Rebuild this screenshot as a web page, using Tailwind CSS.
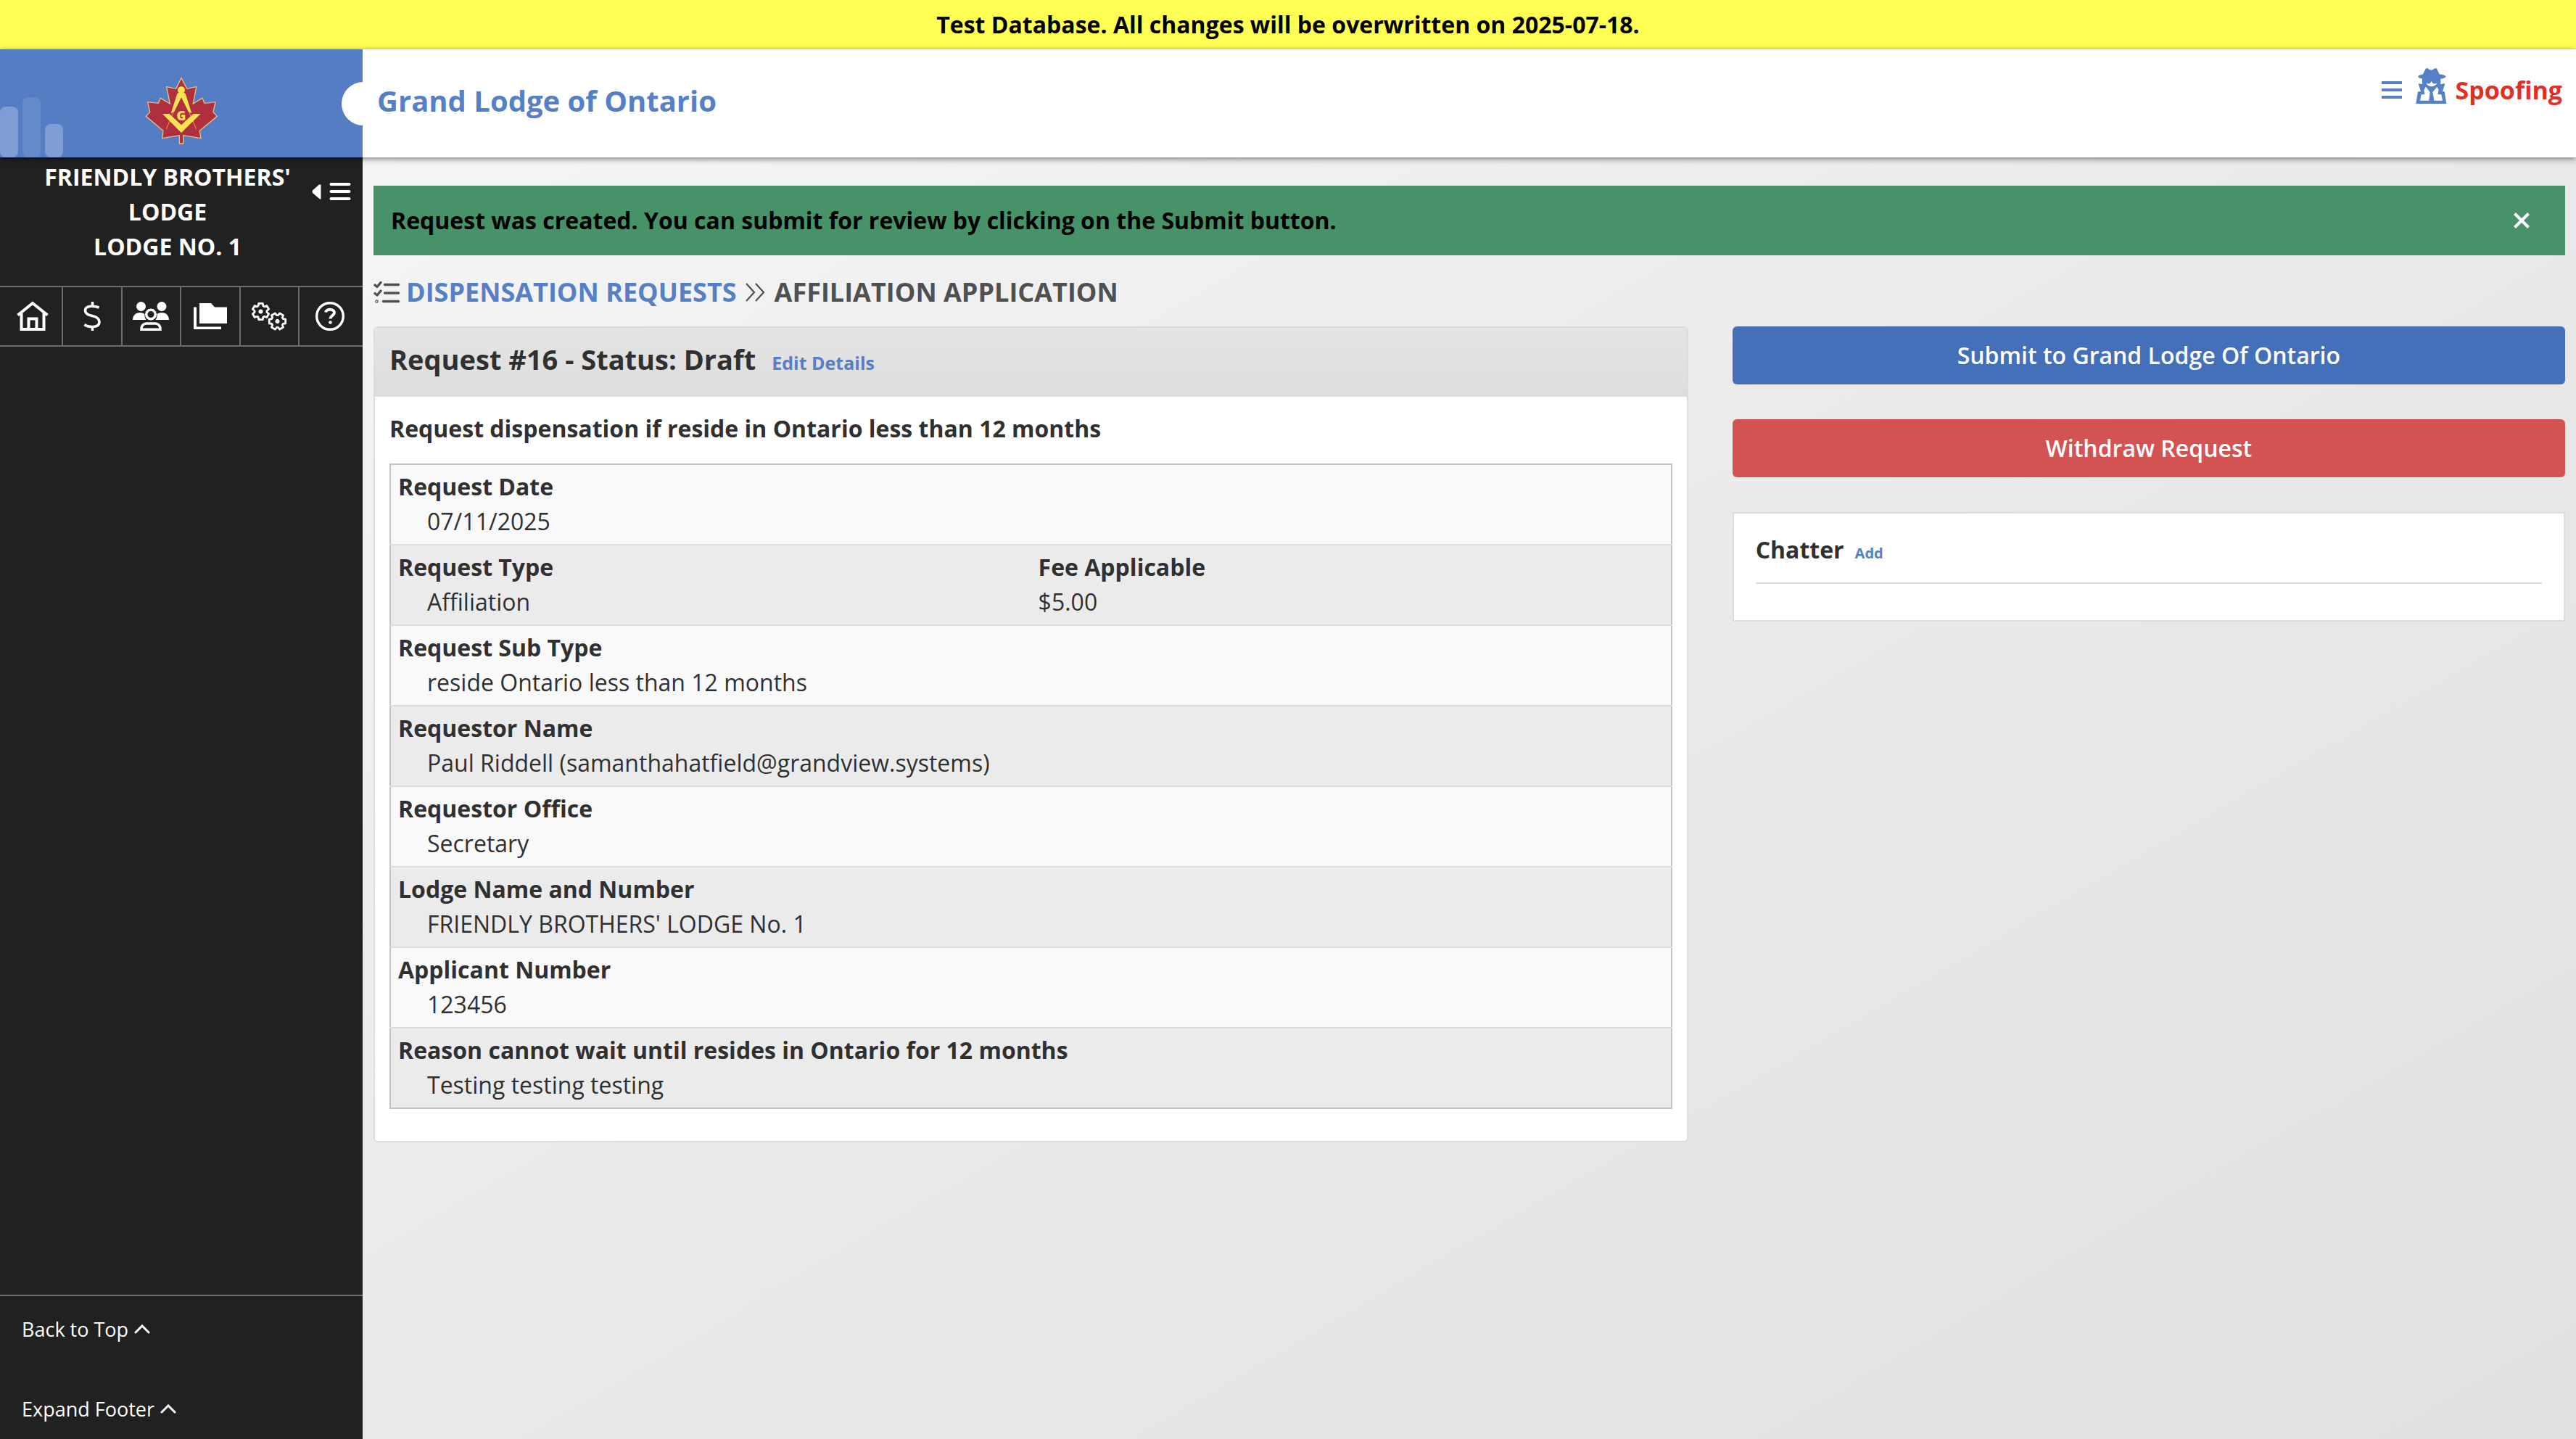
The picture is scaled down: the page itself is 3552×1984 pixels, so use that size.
<!DOCTYPE html>
<html lang="en">
<head>
<meta charset="utf-8">
<title>Grand Lodge of Ontario</title>
<script src="https://cdn.jsdelivr.net/npm/@tailwindcss/browser@4"></script>
</head>
<body class="flex min-h-screen flex-col bg-[#f5f5f5] font-['Open_Sans',sans-serif] text-[32px] leading-[48px] text-[#303030]">

<div class="flex h-[68px] items-center justify-center bg-[#ffff54] font-bold text-black">
  <p>Test Database. All changes will be overwritten on 2025-07-18.</p>
</div>

<header class="relative z-10 flex h-[149px] bg-white shadow-[0_2px_8px_rgba(0,0,0,0.5)]">
  <div class="relative flex w-[500px] shrink-0 items-center justify-center bg-[#547dc3]">
    <div class="absolute bottom-0 left-0 flex items-end gap-[6px]">
      <span class="h-[70px] w-[25px] rounded-[8px] bg-white/25"></span>
      <span class="h-[83px] w-[25px] rounded-[8px] bg-white/10"></span>
      <span class="h-[46px] w-[25px] rounded-[8px] bg-white/25"></span>
    </div>
    <a href="#" aria-label="Home page" class="mt-[20px]">
      <svg class="h-[100px] w-[106px]" viewBox="50 40 318 300">
        <path d="M209 53L232 98L271 90L258 160L296 137L305 158L350 153L341 195L357 212L285 272L290 303L217 291V325H201V291L130 303L134 272L63 212L79 195L70 153L114 158L123 137L162 160L148 90L187 98Z" fill="#b02f3f" stroke="#e0c080" stroke-width="4"/>
        <path d="M209 118L147 265M209 118L271 265" stroke="#e9a34a" stroke-width="3"/>
        <path d="M131 202H160L209 248L258 202H289L209 280Z" fill="#fbe251"/>
        <path d="M203 112L192 118L166 200L180 192L209 134L238 192L252 200L226 118L215 112Z" fill="#fbe251"/>
        <circle cx="209" cy="104" r="15" fill="#fbe251"/>
        <text x="209" y="228" text-anchor="middle" font-family="Open Sans" font-weight="800" font-size="52" fill="#fbe251">G</text>
      </svg>
    </a>
    <span class="absolute top-[45px] -right-[31px] size-[60px] rounded-full bg-white"></span>
  </div>
  <div class="relative flex flex-1 justify-between pt-[21px] pr-[19px] pl-[20px]">
    <h1 class="pt-[26px] text-[40px] font-bold text-[#5580c5]">Grand Lodge of Ontario</h1>
    <div class="flex items-center self-start">
      <button type="button" aria-label="Menu">
        <svg class="h-[28px] w-[28px]" viewBox="0 0 28 28" stroke="#5580c5" stroke-width="4"><path d="M0 4H28M0 14H28M0 24H28"/></svg>
      </button>
      <svg class="mb-[10px] ml-[12px] h-[60px] w-[60px]" viewBox="0 0 180 180">
        <g fill="#5580c5">
          <path d="M46 50L62 17Q68 12 74 19L85 23L96 19Q102 12 108 17L124 50Z"/>
          <ellipse cx="88" cy="50" rx="57" ry="12"/>
          <path d="M48 54H124V76Q118 104 86 108Q54 104 48 76Z"/>
          <path d="M22 162L30 112H42L32 79L54 82Q86 112 118 82L142 79L132 112H140L148 162Z"/>
        </g>
        <g fill="#fff">
          <path d="M64 76Q76 84 83 74L86 68L89 74Q96 84 110 76Q104 90 86 91Q68 90 64 76Z"/>
          <path d="M63 92L80 114L76 149H39L44 124H58L55 104Z"/>
          <path d="M109 92L91 114L97 149H132L127 124H112L116 104Z"/>
        </g>
      </svg>
      <a href="#" class="ml-[2px] text-[34px] font-bold text-[#e03024]">Spoofing</a>
    </div>
  </div>
</header>

<div class="flex flex-1">
  <aside class="flex w-[500px] shrink-0 flex-col bg-[#212121] text-white">
    <div class="relative flex h-[177px] justify-center pt-[3px] pr-[38px] text-center font-bold">
      <p>FRIENDLY BROTHERS'<br>LODGE<br>LODGE NO. 1</p>
      <button type="button" aria-label="Collapse menu" class="absolute top-[33px] right-[16px]">
        <svg class="h-[28px] w-[54px]" viewBox="0 0 54 28"><path d="M12.500 4.500V24.500H11L1 16Q0 14 1 12.500L10 4.500Z" fill="#fff"/><path d="M26.500 4H51.500M26.500 14H51.500M26.500 24H51.500" stroke="#fff" stroke-width="4" stroke-linecap="round"/></svg>
      </button>
    </div>
    <nav class="flex h-[84px] border-y-2 border-[#6c6c6c]">
      <a href="#" aria-label="Home" class="flex w-[87px] items-center justify-center border-r-2 border-[#6c6c6c] pl-[4px]">
        <svg class="h-[42px] w-[44px]" viewBox="0 0 44 42" fill="none" stroke="#fff" stroke-width="4"><path d="M1.500 19.500L22 3L42.500 19.500"/><path d="M6.500 17V39H37.500V17"/><path d="M16.500 39V24.500H27.500V39"/></svg>
      </a>
      <a href="#" aria-label="Finances" class="flex flex-1 items-center justify-center border-r-2 border-[#6c6c6c]">
        <svg class="h-[42px] w-[24px]" viewBox="0 0 24 42" fill="none" stroke="#fff" stroke-width="3.600"><path d="M21.500 9C17 7 2.500 5 2.500 13C2.500 18 7 19.500 12 20.500S22 24 22 29C22 38 6 36 1.500 32.500"/><path d="M12.500 1V7M12.500 35V41"/></svg>
      </a>
      <a href="#" aria-label="Members" class="flex flex-1 items-center justify-center border-r-2 border-[#6c6c6c]">
        <svg class="h-[42px] w-[50px]" viewBox="0 0 50 42"><g fill="#fff"><circle cx="11.500" cy="7.500" r="6.500"/><circle cx="40" cy="7.500" r="6.500"/><path d="M0 26C0 20 4 16 10 16C13 16 15 17 16.500 18C16 21 17 24 18.500 26Z"/><path d="M50 26C50 20 46 16 40 16C37 16 35 17 33.500 18C34 21 33 24 31.500 26Z"/></g><g fill="none" stroke="#fff" stroke-width="3.400"><circle cx="25" cy="18.500" r="6.300"/><path d="M12 39.300V38C12 34 15 31 19 31H31C35 31 38 34 38 38V39.300Z"/></g></svg>
      </a>
      <a href="#" aria-label="Files" class="flex flex-1 items-center justify-center border-r-2 border-[#6c6c6c]">
        <svg class="h-[42px] w-[46px]" viewBox="0 0 46 42" fill="#fff"><path d="M8 3H24L29 8.500H46V31H8Z"/><path d="M0 8.500H4V35.500H38V39H0Z"/></svg>
      </a>
      <a href="#" aria-label="Settings" class="flex flex-1 items-center justify-center border-r-2 border-[#6c6c6c]">
        <svg class="h-[42px] w-[50px]" viewBox="346 415 50 42" fill="none" stroke="#fff" stroke-width="2.800" stroke-linejoin="round">
          <g transform="translate(359.500 429.500)"><path d="M-3.400 -7.800L-2.800 -11.200H2.800L3.400 -7.800L5.100 -6.800L8.300 -8L11.100 -3.200L8.500 -1V1L11.100 3.200L8.300 8L5.100 6.800L3.400 7.800L2.800 11.200H-2.800L-3.400 7.800L-5.100 6.800L-8.300 8L-11.100 3.200L-8.500 1V-1L-11.100 -3.200L-8.300 -8L-5.100 -6.800Z"/><circle r="3" fill="#fff" stroke="none"/></g>
          <g transform="translate(382.500 443) rotate(30)"><path d="M-3.400 -7.800L-2.800 -11.200H2.800L3.400 -7.800L5.100 -6.800L8.300 -8L11.100 -3.200L8.500 -1V1L11.100 3.200L8.300 8L5.100 6.800L3.400 7.800L2.800 11.200H-2.800L-3.400 7.800L-5.100 6.800L-8.300 8L-11.100 3.200L-8.500 1V-1L-11.100 -3.200L-8.300 -8L-5.100 -6.800Z"/><circle r="3" fill="#fff" stroke="none"/></g>
        </svg>
      </a>
      <a href="#" aria-label="Help" class="flex w-[87px] items-center justify-center pr-[4px]">
        <svg class="h-[42px] w-[42px]" viewBox="0 0 42 42" fill="none" stroke="#fff"><circle cx="21" cy="21" r="18.300" stroke-width="3.400"/><path d="M15 15.500C16 10.500 27 10.500 27 16C27 20 21.500 20 21.500 24.500" stroke-width="4"/><circle cx="21.500" cy="29.500" r="2.300" fill="#fff" stroke="none"/></svg>
      </a>
    </nav>
    <div class="mt-auto flex flex-col items-start gap-[70px] border-t-2 border-[#6c6c6c] pt-[26px] pb-[21px] pl-[30px] text-[27px] leading-[40px]">
      <a href="#" class="flex items-center gap-[8px]">Back to Top
        <svg class="h-[14px] w-[22px]" viewBox="0 0 22 14" fill="none" stroke="#fff" stroke-width="3" stroke-linecap="round"><path d="M2 11L11 2L20 11"/></svg>
      </a>
      <a href="#" class="flex items-center gap-[8px]">Expand Footer
        <svg class="h-[14px] w-[22px]" viewBox="0 0 22 14" fill="none" stroke="#fff" stroke-width="3" stroke-linecap="round"><path d="M2 11L11 2L20 11"/></svg>
      </a>
    </div>
  </aside>

  <main class="min-w-0 flex-1 bg-linear-to-br from-[#f5f5f5] via-[#e9e9e9] to-[#e1e1e1] px-[15px] pt-[39px]">
    <div role="alert" class="flex h-[96px] items-center justify-between bg-[#479268] pr-[48px] pl-[24px] font-bold text-black">
      <p>Request was created. You can submit for review by clicking on the Submit button.</p>
      <button type="button" aria-label="Close">
        <svg class="size-[24px]" viewBox="0 0 24 24" stroke="#fff" stroke-width="4"><path d="M2.500 2.500L21.500 21.500M21.500 2.500L2.500 21.500"/></svg>
      </button>
    </div>

    <nav class="mt-[27px] mb-[23px] flex items-center text-[36px] font-bold text-[#505050]">
      <svg class="h-[34px] w-[37px]" viewBox="0 0 37 34" fill="none" stroke="#505050" stroke-width="3.400" stroke-linecap="round" stroke-linejoin="round"><path d="M15.500 6.500H34.500M15.500 18H34.500M13.500 29.500H34.500"/><path d="M2 7L5 9.500L10 3.500M2 18.500L5 21L10 15"/><circle cx="4.500" cy="29.500" r="0.600"/></svg>
      <a href="#" class="ml-[8px] text-[#5580c5]">DISPENSATION REQUESTS</a>
      <svg class="ml-[11px] h-[28px] w-[28px]" viewBox="0 0 28 28" fill="none" stroke="#505050" stroke-width="2.200"><path d="M2 2L13 14L2 26M15 2L26 14L15 26"/></svg>
      <span class="ml-[13px]">AFFILIATION APPLICATION</span>
    </nav>

    <div class="flex items-start justify-between">
      <section class="w-[60%] overflow-hidden rounded-[6px] border-2 border-[#dcdcdc] bg-white">
        <div class="flex h-[95px] items-baseline bg-linear-to-b from-[#e4e4e4] to-[#dddddd] px-[20px] pt-[19px]">
          <h2 class="text-[38px] font-bold">Request #16 - Status: Draft</h2>
          <a href="#" class="ml-[22px] text-[25px] font-bold text-[#5580c5]">Edit Details</a>
        </div>
        <div class="px-[20px] pt-[20px] pb-[44px]">
          <h3 class="font-bold">Request dispensation if reside in Ontario less than 12 months</h3>
          <table class="mt-[24px] w-full table-fixed border-collapse border-2 border-[#c3c3c3]">
            <tbody>
              <tr class="border-b-2 border-[#dcdcdc] bg-[#f9f9f9]"><td colspan="2" class="px-[10px] pt-[6px] pb-[7px]"><strong class="block">Request Date</strong><span class="block pl-[40px]">07/11/2025</span></td></tr>
              <tr class="border-b-2 border-[#dcdcdc] bg-[#ebebeb]"><td class="px-[10px] pt-[6px] pb-[7px]"><strong class="block">Request Type</strong><span class="block pl-[40px]">Affiliation</span></td><td class="px-[10px] pt-[6px] pb-[7px]"><strong class="block">Fee Applicable</strong><span class="block">$5.00</span></td></tr>
              <tr class="border-b-2 border-[#dcdcdc] bg-[#f9f9f9]"><td colspan="2" class="px-[10px] pt-[6px] pb-[7px]"><strong class="block">Request Sub Type</strong><span class="block pl-[40px]">reside Ontario less than 12 months</span></td></tr>
              <tr class="border-b-2 border-[#dcdcdc] bg-[#ebebeb]"><td colspan="2" class="px-[10px] pt-[6px] pb-[7px]"><strong class="block">Requestor Name</strong><span class="block pl-[40px]">Paul Riddell (samanthahatfield@grandview.systems)</span></td></tr>
              <tr class="border-b-2 border-[#dcdcdc] bg-[#f9f9f9]"><td colspan="2" class="px-[10px] pt-[6px] pb-[7px]"><strong class="block">Requestor Office</strong><span class="block pl-[40px]">Secretary</span></td></tr>
              <tr class="border-b-2 border-[#dcdcdc] bg-[#ebebeb]"><td colspan="2" class="px-[10px] pt-[6px] pb-[7px]"><strong class="block">Lodge Name and Number</strong><span class="block pl-[40px]">FRIENDLY BROTHERS' LODGE No. 1</span></td></tr>
              <tr class="border-b-2 border-[#dcdcdc] bg-[#f9f9f9]"><td colspan="2" class="px-[10px] pt-[6px] pb-[7px]"><strong class="block">Applicant Number</strong><span class="block pl-[40px]">123456</span></td></tr>
              <tr class="bg-[#ebebeb]"><td colspan="2" class="px-[10px] pt-[6px] pb-[7px]"><strong class="block">Reason cannot wait until resides in Ontario for 12 months</strong><span class="block pl-[40px]">Testing testing testing</span></td></tr>
            </tbody>
          </table>
        </div>
      </section>

      <div class="flex w-[38%] flex-col gap-[48px]">
        <button type="button" class="h-[80px] rounded-[6px] bg-[#4470b9] font-semibold text-white">Submit to Grand Lodge Of Ontario</button>
        <button type="button" class="h-[80px] rounded-[6px] bg-[#d25352] font-semibold text-white">Withdraw Request</button>
        <section class="border-2 border-[#dcdcdc] bg-white px-[30px] pt-[26px] pb-[50px]">
          <div class="flex items-baseline border-b-2 border-[#dcdcdc] pb-[21px]">
            <h3 class="font-bold">Chatter</h3>
            <a href="#" class="ml-[15px] text-[20px] leading-[30px] font-bold text-[#5580c5]">Add</a>
          </div>
        </section>
      </div>
    </div>
  </main>
</div>
</body>
</html>
